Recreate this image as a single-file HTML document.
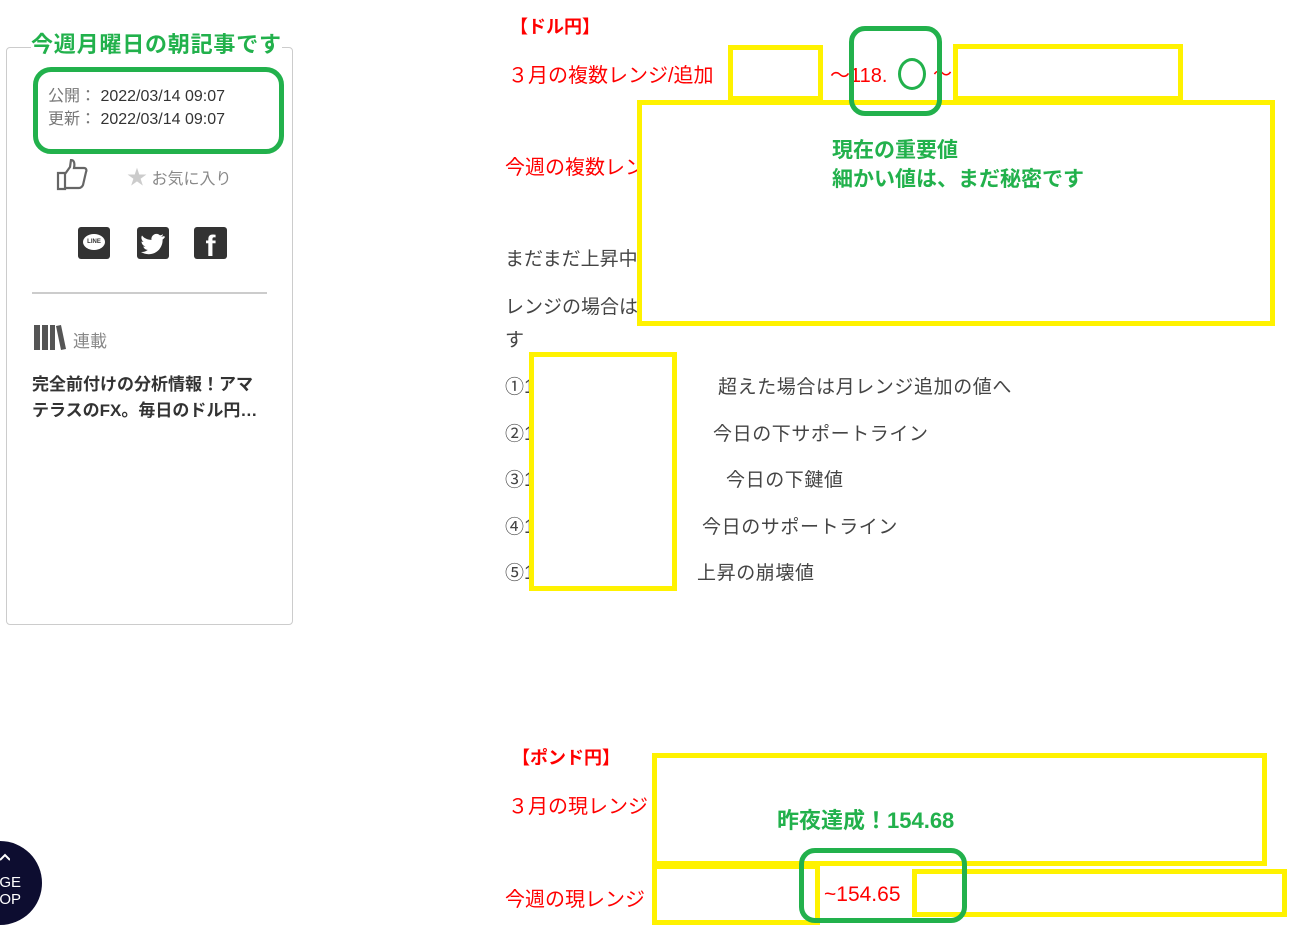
<!DOCTYPE html>
<html><head><meta charset="utf-8"><style>
body{margin:0;width:1292px;height:925px;overflow:hidden;background:#fff;position:relative;font-family:"Liberation Sans","Noto Sans CJK JP",sans-serif;}
.a{position:absolute;white-space:nowrap;}
.r{color:#f00;font-size:19px;}
.g{color:#444;font-size:19px;}
.y{position:absolute;border:5px solid #fff200;box-sizing:border-box;}
.gr{position:absolute;border:5px solid #22b14c;box-sizing:border-box;}
.gt{color:#22b14c;font-weight:bold;}
</style></head><body>
<div style="position:absolute;left:6px;top:47px;width:287px;height:578px;border:1px solid #ccc;border-radius:4px;box-sizing:border-box"></div>
<div class="a gt" style="left:31px;top:27px;font-size:22px;letter-spacing:0.8px;background:#fff">今週月曜日の朝記事です</div>
<div class="a" style="left:48px;top:85px;font-size:16px;color:#777;line-height:23px">公開： <span style="color:#333">2022/03/14 09:07</span><br>更新： <span style="color:#333">2022/03/14 09:07</span></div>
<div class="gr" style="left:33px;top:67px;width:251px;height:87px;border-radius:18px"></div>
<svg class="a" style="left:56px;top:159px" width="32" height="32" viewBox="0 0 32 32"><path d="M2 14h7v16H2z M9 15l5-7 1-7c3 0 4 3 3 8h10c2 0 3 2 2 4l-3 13c-1 2-2 3-4 3H9" fill="none" stroke="#666" stroke-width="2.2"/></svg>
<div class="a" style="left:127px;top:161px;font-size:16px;color:#888"><span style="color:#ccc;font-size:20px">★</span> お気に入り</div>
<div class="a" style="left:78px;top:227px;width:32px;height:32px;background:#333;border-radius:3px"><div style="position:absolute;left:5px;top:7px;width:22px;height:16px;background:#fff;border-radius:50%;font-size:6px;font-weight:bold;text-align:center;line-height:16px;color:#333">LINE</div></div>
<svg class="a" style="left:137px;top:227px" width="32" height="32"><rect width="32" height="32" rx="3" fill="#333"/><path d="M27 9c-1 .5-2 .7-3 .8 1-.6 2-1.6 2-2.6-1 .6-2 1-3 1.2a5 5 0 0 0-8.5 4.5C10 12.7 7 11 5 8.5c-1.5 2.5 0 5 1.5 6.5-.8 0-1.5-.3-2-.6 0 2.5 1.7 4.5 4 5-.8.2-1.5.2-2.2.1.6 2 2.5 3.4 4.6 3.4A10 10 0 0 1 4 25c2.2 1.4 4.800 2.200 7.6 2.200 9 0 14-7.5 14-14v-.7c1-.7 1.800-1.600 2.400-2.500z" fill="#fff"/></svg>
<div class="a" style="left:194px;top:227px;width:33px;height:32px;background:#333;border-radius:3px;color:#fff;font-size:30px;font-weight:bold;text-align:center;line-height:40px;overflow:hidden">f</div>
<div class="a" style="left:32px;top:292px;width:235px;height:2px;background:#ccc"></div>
<svg class="a" style="left:34px;top:323px" width="32" height="28"><rect x="0" y="2" width="6" height="25" fill="#555"/><rect x="8" y="2" width="6" height="25" fill="#555"/><rect x="16" y="2" width="5" height="25" fill="#555"/><path d="M22 3l5-1 5 24-5 1z" fill="#555"/></svg>
<div class="a" style="left:73px;top:327px;font-size:17px;color:#888">連載</div>
<div class="a" style="left:32px;top:372px;font-size:17px;font-weight:bold;color:#333;line-height:26px">完全前付けの分析情報！アマ<br>テラスのFX。毎日のドル円…</div>

<div class="a r" style="left:510px;top:13px;font-weight:bold;font-size:18px">【ドル円】</div>
<div class="a r" style="left:508px;top:59px;font-size:20px">３月の複数レンジ/追加</div>
<div class="a r" style="left:830px;top:59px;font-size:20px">～118.</div>
<div class="a r" style="left:933px;top:59px">～</div>
<div class="a r" style="left:505px;top:151px;font-size:20px">今週の複数レンジ</div>
<div class="a g" style="left:505px;top:244px">まだまだ上昇中</div>
<div class="a g" style="left:505px;top:292px">レンジの場合は</div>
<div class="a g" style="left:505px;top:325px">す</div>
<div class="a g" style="left:505px;top:372px">①1</div>
<div class="a g" style="left:718px;top:372px;letter-spacing:0.6px">超えた場合は月レンジ追加の値へ</div>
<div class="a g" style="left:505px;top:419px">②1</div>
<div class="a g" style="left:713px;top:419px;letter-spacing:0.6px">今日の下サポートライン</div>
<div class="a g" style="left:505px;top:465px">③1</div>
<div class="a g" style="left:726px;top:465px;letter-spacing:0.6px">今日の下鍵値</div>
<div class="a g" style="left:505px;top:512px">④1</div>
<div class="a g" style="left:702px;top:512px;letter-spacing:0.6px">今日のサポートライン</div>
<div class="a g" style="left:505px;top:558px">⑤1</div>
<div class="a g" style="left:697px;top:558px;letter-spacing:0.6px">上昇の崩壊値</div>

<div class="y" style="left:728px;top:45px;width:95px;height:56px;background:#fff"></div>
<div class="y" style="left:953px;top:44px;width:230px;height:57px;background:#fff"></div>
<div class="y" style="left:637px;top:100px;width:638px;height:226px;background:#fff"></div>
<div class="a gt" style="left:832px;top:136px;font-size:21px;line-height:29px">現在の重要値<br>細かい値は、まだ秘密です</div>
<div class="y" style="left:529px;top:352px;width:148px;height:239px;background:#fff"></div>
<div class="gr" style="left:849px;top:26px;width:93px;height:90px;border-radius:16px"></div>
<div style="position:absolute;left:898px;top:58px;width:28px;height:32px;border:3px solid #22b14c;border-radius:50%;box-sizing:border-box;background:#fff"></div>

<div class="a r" style="left:512px;top:744px;font-weight:bold;font-size:18px">【ポンド円】</div>
<div class="a r" style="left:508px;top:790px;font-size:20px">３月の現レンジ</div>
<div class="a r" style="left:505px;top:883px;font-size:20px">今週の現レンジ</div>
<div class="y" style="left:652px;top:753px;width:615px;height:113px;background:#fff"></div>
<div class="a gt" style="left:777px;top:803px;font-size:22px">昨夜達成！154.68</div>
<div class="y" style="left:652px;top:864px;width:168px;height:61px;background:#fff"></div>
<div class="a r" style="left:824px;top:883px;font-size:21px">~154.65</div>
<div class="y" style="left:912px;top:869px;width:375px;height:48px;background:#fff"></div>
<div class="gr" style="left:799px;top:848px;width:168px;height:75px;border-radius:16px"></div>

<div style="position:absolute;left:-42px;top:841px;width:84px;height:84px;border-radius:50%;background:#0d0d30;color:#fff;font-size:15px;line-height:17px;text-align:right;box-sizing:border-box;padding:33px 21px 0 0">GE<br>OP</div>
<svg class="a" style="left:0;top:852px" width="10" height="10"><path d="M0 8l5-5 5 5" fill="none" stroke="#fff" stroke-width="2"/></svg>
</body></html>
